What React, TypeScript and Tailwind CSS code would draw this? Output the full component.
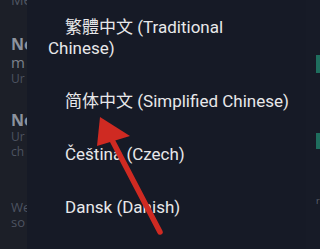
import React from 'react';

const languages = ['简体中文 (Simplified Chinese)', 'Čeština (Czech)', 'Dansk (Danish)'];

function BackdropLeft() {
  // обрезанный список под диалогом
  return (
    <div className="w-[27px] shrink-0 overflow-hidden bg-[#1c1f28] pl-[11px] font-['Open_Sans',sans-serif] whitespace-nowrap">
      <div className="-mt-[8px] text-[14px] leading-[16px] text-[#4f5562]">Me</div>
      <div className="mt-[27px] text-[16px] font-bold leading-[18px] text-[#8d939e]">Ne</div>
      <div className="mt-[1px] text-[15px] leading-[16px] text-[#7b818c]">m</div>
      <div className="mt-[1px] text-[12px] leading-[16px] text-[#4d5361]">Ur</div>
      <div className="mt-[24px] text-[16px] font-bold leading-[18px] text-[#8d939e]">Ne</div>
      <div className="text-[12px] leading-[15px] text-[#4d5361]">Ur</div>
      <div className="text-[12px] leading-[15px] text-[#4d5361]">ch</div>
      <div className="mt-[40px] text-[13px] leading-[16px] text-[#4d5361]">We</div>
      <div className="text-[13px] leading-[15px] text-[#4d5361]">so</div>
    </div>
  );
}

function BackdropRight() {
  return (
    <div className="w-[14px] shrink-0 overflow-hidden bg-[#171b27] flex flex-col items-end">
      <div className="mt-[55px] h-[18px] w-[4px] bg-[#1f6e5e]" />
      <div className="mt-[60px] h-[16px] w-[4px] bg-[#1f6e5e]" />
      <div className="mt-[47px] w-[4px] text-[9px] leading-[10px] text-[#5a606b] overflow-hidden">r</div>
    </div>
  );
}

function Arrow() {
  return (
    <svg className="pointer-events-none absolute left-0 top-0" width="320" height="249" viewBox="0 0 320 249">
      <line x1="112" y1="140" x2="160" y2="232" stroke="#cf2a22" strokeWidth="5.5" strokeLinecap="round" />
      <polygon points="100,117 130,136 97,146" fill="#cf2a22" />
    </svg>
  );
}

export default function App() {
  return (
    <div className="relative flex h-[249px] w-[320px] overflow-hidden bg-[#171b27]">
      <BackdropLeft />

      {/* Диалог выбора языка */}
      <div className="flex min-w-0 flex-1 flex-col bg-[#161a26] pt-[1px] font-['Roboto','Noto_Sans_CJK_SC',sans-serif] text-[17px] leading-[21px] text-[#e8e8ea]">
        <div className="py-4">
          <div className="pl-[38px] whitespace-nowrap font-['Roboto','Noto_Sans_CJK_TC',sans-serif]">繁體中文 (Traditional</div>
          <div className="pl-[21px]">Chinese)</div>
        </div>
        {languages.map((l) => (
          <div key={l} className="py-4 pl-[38px] whitespace-nowrap">
            {l}
          </div>
        ))}
      </div>

      <BackdropRight />
      <Arrow />
    </div>
  );
}
